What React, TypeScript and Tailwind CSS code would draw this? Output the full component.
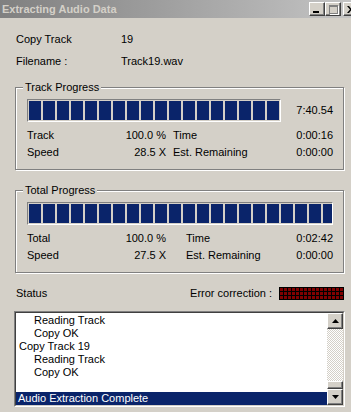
import React from "react";

const raised =
  "border border-t-white border-l-white border-r-[#404040] border-b-[#404040] shadow-[inset_-1px_-1px_0_#808080,inset_1px_1px_0_#d4d0c8] bg-[#d4d0c8]";

const Blocks: React.FC<{ count: number; width: number }> = ({ count, width }) => (
  <div
    className="flex h-[23px] gap-[2px] overflow-hidden border border-t-[#808080] border-l-[#808080] border-r-white border-b-white bg-[#d4d0c8] p-px"
    style={{ width }}
  >
    {Array.from({ length: count }).map((_, i) => (
      <div key={i} className="h-full w-[12px] shrink-0 bg-[#0a246a]" />
    ))}
  </div>
);

interface IStatRow {
  label: string;
  value: string;
  label2: string;
  value2: string;
}

const Stats: React.FC<{ rows: IStatRow[]; gap: string }> = ({ rows, gap }) => (
  <div className="mt-[7px] flex flex-col gap-[4px]">
    {rows.map((r, i) => (
      <div key={i} className="flex h-[13px] leading-[13px]">
        <div className="flex w-[139px] justify-between">
          <span>{r.label}</span>
          <span>{r.value}</span>
        </div>
        <div className={"flex flex-1 justify-between " + gap}>
          <span>{r.label2}</span>
          <span>{r.value2}</span>
        </div>
      </div>
    ))}
  </div>
);

const Group: React.FC<{ title: string; children: React.ReactNode; className?: string }> = ({
  title,
  children,
  className,
}) => (
  <fieldset
    className={
      "ml-[15px] w-[329px] border border-[#808080] pb-[10px] pl-[11px] pr-[10px] pt-[5px] shadow-[inset_1px_1px_0_#fff,1px_1px_0_#fff] " +
      (className ?? "")
    }
  >
    <legend className="ml-[-4px] bg-[#d4d0c8] px-[2px] leading-[13px]">{title}</legend>
    {children}
  </fieldset>
);

const Arrow: React.FC<{ down?: boolean }> = ({ down }) => (
  <svg width="7" height="4" viewBox="0 0 7 4" className={down ? "rotate-180" : ""}>
    <polygon points="3.5,0 7,4 0,4" fill="#000" />
  </svg>
);

export default function App() {
  const lines = [
    { text: "Reading Track", indent: true },
    { text: "Copy OK", indent: true },
    { text: "Copy Track 19", indent: false },
    { text: "Reading Track", indent: true },
    { text: "Copy OK", indent: true },
    { text: "\u00a0", indent: false },
  ];

  return (
    <div className="h-[412px] w-[351px] overflow-hidden bg-[#d4d0c8] font-['Liberation_Sans',Arial,sans-serif] text-[11px] text-black">
      {/* title bar */}
      <div className="flex h-[18px] items-center bg-gradient-to-r from-[#808080] to-[#c4c4c4] pl-[2px]">
        <span className="font-bold leading-[13px] text-[#d4d0c8]">Extracting Audio Data</span>
        <div className="flex-1" />
        <div className="mr-[-8px] flex shrink-0">
          <div className={"flex h-[14px] w-[16px] items-end justify-start pb-[2px] pl-[3px] " + raised}>
            <div className="h-[2px] w-[6px] bg-black" />
          </div>
          <div className={"flex h-[14px] w-[16px] items-center justify-center " + raised}>
            <div className="h-[9px] w-[9px] border border-t-2 border-[#808080] shadow-[1px_1px_0_#fff]" />
          </div>
          <div className={"ml-[2px] flex h-[14px] w-[16px] items-center justify-center " + raised}>
            <svg width="8" height="7" viewBox="0 0 8 7">
              <path d="M0 0 L2 0 L4 2.5 L6 0 L8 0 L5 3.5 L8 7 L6 7 L4 4.5 L2 7 L0 7 L3 3.5 Z" fill="#000" />
            </svg>
          </div>
        </div>
      </div>

      {/* header info */}
      <div className="mt-[15px] flex flex-col gap-[9px] pl-[16px] leading-[13px]">
        <div className="flex">
          <span className="w-[105px]">Copy Track</span>
          <span>19</span>
        </div>
        <div className="flex">
          <span className="w-[105px]">Filename :</span>
          <span>Track19.wav</span>
        </div>
      </div>

      <Group title="Track Progress" className="mt-[13px]">
        <div className="flex items-center">
          <Blocks count={18} width={254} />
          <span className="flex-1 text-right">7:40.54</span>
        </div>
        <Stats
          gap="ml-[7px]"
          rows={[
            { label: "Track", value: "100.0 %", label2: "Time", value2: "0:00:16" },
            { label: "Speed", value: "28.5 X", label2: "Est. Remaining", value2: "0:00:00" },
          ]}
        />
      </Group>

      <Group title="Total Progress" className="mt-[14px]">
        <Blocks count={22} width={306} />
        <Stats
          gap="ml-[20px]"
          rows={[
            { label: "Total", value: "100.0 %", label2: "Time", value2: "0:02:42" },
            { label: "Speed", value: "27.5 X", label2: "Est. Remaining", value2: "0:00:00" },
          ]}
        />
      </Group>

      {/* status row */}
      <div className="mt-[14px] flex h-[13px] items-center pl-[16px] leading-[13px]">
        <span className="flex-1">Status</span>
        <span className="mr-[7px]">Error correction :</span>
        <div className="mr-[7px] grid h-[13px] w-[65px] grid-cols-[repeat(16,3px)] grid-rows-[repeat(3,3px)] gap-px bg-black p-px">
          {Array.from({ length: 48 }).map((_, i) => (
            <div key={i} className="bg-[#800000]" />
          ))}
        </div>
      </div>

      {/* status list */}
      <div className="ml-[14px] mt-[11px] flex h-[96px] w-[331px] border border-t-[#808080] border-l-[#808080] border-r-white border-b-white">
        <div className="flex flex-1 border border-t-[#404040] border-l-[#404040] border-r-[#d4d0c8] border-b-[#d4d0c8] bg-white">
          <div className="flex flex-1 flex-col pt-px leading-[13px]">
            {lines.map((l, i) => (
              <div key={i} className={l.indent ? "pl-[18px]" : "pl-[3px]"}>
                {l.text}
              </div>
            ))}
            <div className="bg-[#0a246a] pl-[2px] text-white">Audio Extraction Complete</div>
          </div>
          <div className="flex w-[16px] flex-col">
            <div className={"flex h-[16px] items-center justify-center " + raised}>
              <Arrow />
            </div>
            <div className="flex-1 bg-[repeating-conic-gradient(#fff_0_25%,#d4d0c8_0_50%)] bg-[length:2px_2px]" />
            <div className={"h-[8px] " + raised} />
            <div className={"flex h-[16px] items-center justify-center " + raised}>
              <Arrow down />
            </div>
          </div>
        </div>
      </div>
    </div>
  );
}
